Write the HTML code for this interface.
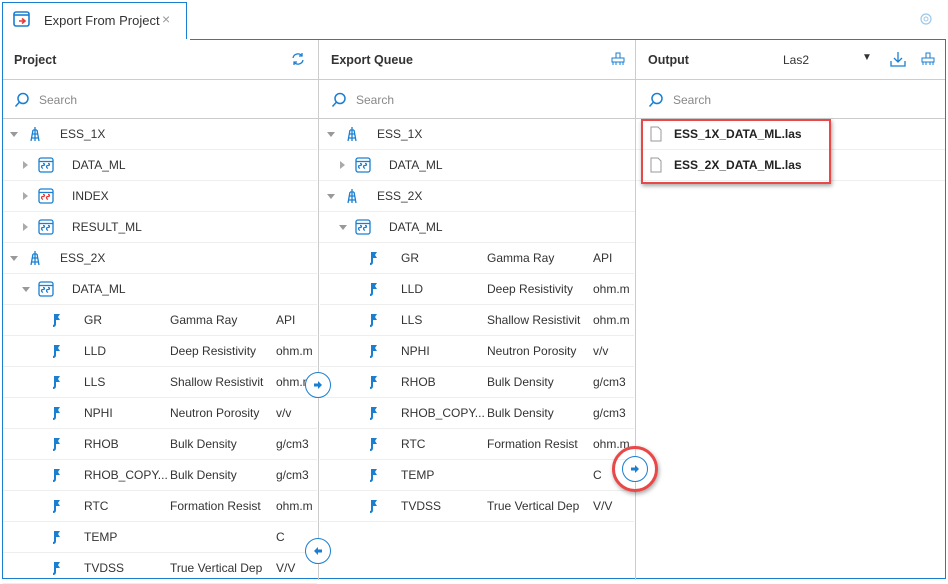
<!DOCTYPE html>
<html><head><meta charset="utf-8"><style>
*{margin:0;padding:0;box-sizing:border-box}
body{width:948px;height:577px;overflow:hidden;background:#fff;font-family:"Liberation Sans",sans-serif;font-size:12px;color:#333;position:relative}
.a{position:absolute;white-space:nowrap}
.h{font-weight:bold;font-size:12.5px;color:#333}
.s{color:#888;font-size:12px}
.row{position:absolute;height:1px;background:#eee}
.line{position:absolute;background:#ccc}
.tri{position:absolute;width:0;height:0}
.td{border-left:4px solid transparent;border-right:4px solid transparent;border-top:5px solid #999}
.tr{border-top:4px solid transparent;border-bottom:4px solid transparent;border-left:5px solid #aaa}
.btn{position:absolute;width:26px;height:26px;border:1.3px solid #1a7fd0;border-radius:50%;background:#fff}
</style></head><body>
<!-- tab -->
<div class="a" style="left:2px;top:2px;width:185px;height:38px;border:1.3px solid #1a7fd0;border-bottom:none;background:#fff"></div>
<svg class="a" style="left:13px;top:11px" width="18" height="17"><rect x="1" y="1" width="15" height="14" rx="2" fill="none" stroke="#1a7fd0" stroke-width="1.6"/><line x1="1" y1="4" x2="16" y2="4" stroke="#1a7fd0" stroke-width="1.6"/><path d="M6 10h5M9 7.5l3 2.5-3 2.5" stroke="#e53935" stroke-width="1.6" fill="none"/></svg>
<div class="a" style="left:44px;top:13px;font-size:13px;color:#333">Export From Project</div>
<div class="a" style="left:162px;top:11px;font-size:14px;color:#999">×</div>
<svg class="a" style="left:919px;top:12px" width="14" height="14"><circle cx="7" cy="7" r="5" fill="none" stroke="#9cc7ea" stroke-width="1.2"/><circle cx="7" cy="7" r="2" fill="none" stroke="#9cc7ea"/></svg>
<!-- frame -->
<div class="a" style="left:2px;top:39px;width:944px;height:540px;border:1.3px solid #1a7fd0"></div>
<div class="a" style="left:0;top:39px;width:187px;height:2px;background:#fff;left:3px"></div>
<div class="line" style="left:318px;top:40px;width:1px;height:540px"></div>
<div class="line" style="left:635px;top:40px;width:1px;height:540px"></div>
<div class="line" style="left:3px;top:79px;width:942px;height:1px"></div>
<div class="line" style="left:3px;top:118px;width:942px;height:1px"></div>
<!-- headers -->
<div class="a h" style="left:14px;top:53px">Project</div>
<div class="a h" style="left:331px;top:53px">Export Queue</div>
<div class="a h" style="left:648px;top:53px">Output</div>
<div class="a" style="left:783px;top:53px;color:#333">Las2</div>
<div class="a" style="left:862px;top:52px;font-size:10px;color:#333">▼</div>
<svg class="a" style="left:290px;top:51px" width="16" height="16"><path d="M3 7a5 5 0 0 1 9-2M13 9a5 5 0 0 1-9 2" fill="none" stroke="#1a7fd0" stroke-width="1.3"/><path d="M12 2v3h-3M4 14v-3h3" fill="none" stroke="#1a7fd0" stroke-width="1.3"/></svg>
<svg class="a" style="left:610px;top:51px" width="16" height="16"><rect x="6" y="2" width="4" height="5" fill="none" stroke="#1a7fd0"/><rect x="2" y="7" width="12" height="4" fill="none" stroke="#1a7fd0"/><path d="M3 11v3M13 11v3M6 11v3M10 11v3" stroke="#1a7fd0"/></svg>
<svg class="a" style="left:920px;top:51px" width="16" height="16"><rect x="6" y="2" width="4" height="5" fill="none" stroke="#1a7fd0"/><rect x="2" y="7" width="12" height="4" fill="none" stroke="#1a7fd0"/><path d="M3 11v3M13 11v3M6 11v3M10 11v3" stroke="#1a7fd0"/></svg>
<svg class="a" style="left:889px;top:50px" width="18" height="18"><path d="M9 2v10M5 8l4 4 4-4M2 11v5h14v-5" fill="none" stroke="#1a7fd0" stroke-width="1.3"/></svg>
<!-- search -->
<svg class="a" style="left:14px;top:92px" width="16" height="16"><circle cx="9" cy="6.5" r="5" fill="none" stroke="#1a7fd0" stroke-width="1.5"/><line x1="5.5" y1="10" x2="1.5" y2="14.5" stroke="#1a7fd0" stroke-width="1.5"/></svg>
<div class="a s" style="left:39px;top:93px">Search</div>
<svg class="a" style="left:331px;top:92px" width="16" height="16"><circle cx="9" cy="6.5" r="5" fill="none" stroke="#1a7fd0" stroke-width="1.5"/><line x1="5.5" y1="10" x2="1.5" y2="14.5" stroke="#1a7fd0" stroke-width="1.5"/></svg>
<div class="a s" style="left:356px;top:93px">Search</div>
<svg class="a" style="left:648px;top:92px" width="16" height="16"><circle cx="9" cy="6.5" r="5" fill="none" stroke="#1a7fd0" stroke-width="1.5"/><line x1="5.5" y1="10" x2="1.5" y2="14.5" stroke="#1a7fd0" stroke-width="1.5"/></svg>
<div class="a s" style="left:673px;top:93px">Search</div>

<div id="rows"></div>
<script>
var html='';
function well(x,y){return '<svg class="a" style="left:'+x+'px;top:'+(y-8)+'px" width="10" height="16"><path d="M5 1v14M3 4h4M2 8h6M1 12h8M3 4L1 15M7 4l2 11" stroke="#1a7fd0" stroke-width="1.3" fill="none"/></svg>';}
function ds(x,y,c){return '<svg class="a" style="left:'+x+'px;top:'+(y-8)+'px" width="16" height="16"><rect x="1" y="1" width="14" height="14" rx="2" fill="none" stroke="#1a7fd0" stroke-width="1.3"/><line x1="1" y1="4.5" x2="15" y2="4.5" stroke="#1a7fd0" stroke-width="1.3"/><path d="M5 6.5c2 0 2 2 0 2s-2 2 0 3M10 6.5c2 0 2 2 0 2s-2 2 0 3" stroke="'+c+'" stroke-width="1.2" fill="none"/></svg>';}
function cv(x,y){return '<svg class="a" style="left:'+x+'px;top:'+(y-8)+'px" width="10" height="16"><path d="M3 2h5l-2 3 2 3H3z" fill="#1a7fd0"/><path d="M3 2v10q0 2-2 2" stroke="#1a7fd0" stroke-width="2" fill="none"/></svg>';}
function t(x,y,s,st){return '<div class="a" style="left:'+x+'px;top:'+(y-7)+'px;'+(st||'')+'">'+s+'</div>';}
function tri(x,y,d){return d?'<div class="tri td" style="left:'+x+'px;top:'+(y-2)+'px"></div>':'<div class="tri tr" style="left:'+(x+1)+'px;top:'+(y-4)+'px"></div>';}
function ln(x,y,w){return '<div class="row" style="left:'+x+'px;top:'+(y+15)+'px;width:'+w+'px"></div>';}
var c=[['GR','Gamma Ray','API'],['LLD','Deep Resistivity','ohm.m'],['LLS','Shallow Resistivit','ohm.m'],['NPHI','Neutron Porosity','v/v'],['RHOB','Bulk Density','g/cm3'],['RHOB_COPY...','Bulk Density','g/cm3'],['RTC','Formation Resist','ohm.m'],['TEMP','','C'],['TVDSS','True Vertical Dep','V/V']];
function curves(o,y0){for(var i=0;i<c.length;i++){var y=y0+31*i;html+=cv(o+52,y)+t(o+84,y,c[i][0])+'<div class="a" style="left:'+(o+170)+'px;top:'+(y-7)+'px;width:96px;overflow:hidden">'+c[i][1]+'</div>'+'<div class="a" style="left:'+(o+276)+'px;top:'+(y-7)+'px;width:40px;overflow:hidden">'+c[i][2]+'</div>'+ln(o+3,y,314);}}
// project
var y=134;
html+=tri(10,y,1)+well(30,y)+t(60,y,'ESS_1X')+ln(3,y,314);y+=31;
[['DATA_ML','#1a7fd0'],['INDEX','#e53935'],['RESULT_ML','#1a7fd0']].forEach(function(d){html+=tri(22,y,0)+ds(38,y,d[1])+t(72,y,d[0])+ln(3,y,314);y+=31;});
html+=tri(10,y,1)+well(30,y)+t(60,y,'ESS_2X')+ln(3,y,314);y+=31;
html+=tri(22,y,1)+ds(38,y,'#1a7fd0')+t(72,y,'DATA_ML')+ln(3,y,314);y+=31;
curves(0,y);
// queue
var o=317;y=134;
html+=tri(o+10,y,1)+well(o+30,y)+t(o+60,y,'ESS_1X')+ln(o+2,y,316);y+=31;
html+=tri(o+22,y,0)+ds(o+38,y,'#1a7fd0')+t(o+72,y,'DATA_ML')+ln(o+2,y,316);y+=31;
html+=tri(o+10,y,1)+well(o+30,y)+t(o+60,y,'ESS_2X')+ln(o+2,y,316);y+=31;
html+=tri(o+22,y,1)+ds(o+38,y,'#1a7fd0')+t(o+72,y,'DATA_ML')+ln(o+2,y,316);y+=31;
c.splice(4,0);curves(o,y);
// output
function file(y,s){return '<svg class="a" style="left:650px;top:'+(y-8)+'px" width="12" height="16"><path d="M1 1h7l3 3v11H1z" fill="#fff" stroke="#999"/></svg>'+t(674,y,s,'font-weight:bold;color:#222')+ln(636,y,309);}
html+=file(134,'ESS_1X_DATA_ML.las')+file(165,'ESS_2X_DATA_ML.las');
document.getElementById('rows').innerHTML=html;
</script>
<!-- red box -->
<div class="a" style="left:641px;top:119px;width:190px;height:65px;border:2.5px solid #e94848;box-shadow:1px 2px 4px rgba(0,0,0,.35)"></div>
<!-- buttons -->
<div class="btn" style="left:305px;top:372px"></div>
<svg class="a" style="left:313px;top:380px" width="10" height="10"><path d="M1 3.5h4V1l4 4-4 4V6.5H1z" fill="#1a7fd0"/></svg>
<div class="btn" style="left:305px;top:538px"></div>
<svg class="a" style="left:313px;top:546px" width="10" height="10"><path d="M9 3.5H5V1L1 5l4 4V6.5h4z" fill="#1a7fd0"/></svg>
<div class="a" style="left:612px;top:446px;width:46px;height:46px;border:3px solid #e94848;border-radius:50%;box-shadow:1px 2px 4px rgba(0,0,0,.35)"></div>
<div class="btn" style="left:622px;top:456px"></div>
<svg class="a" style="left:630px;top:464px" width="10" height="10"><path d="M1 3.5h4V1l4 4-4 4V6.5H1z" fill="#1a7fd0"/></svg>
</body></html>
